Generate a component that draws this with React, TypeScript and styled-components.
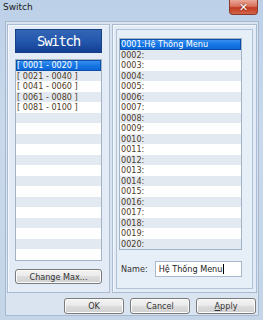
import styled, { createGlobalStyle } from 'styled-components'

const GlobalStyle = createGlobalStyle`
  html, body {
    margin: 0;
    padding: 0;
    background: #c6d7ea;
  }
  * {
    box-sizing: border-box;
  }
`

const Window = styled.div`
  background: linear-gradient(180deg, #bcd0e8 0%, #c9d9eb 40%, #c4d5e8 100%);
  display: flex;
  flex-direction: column;
  font-family: 'DejaVu Sans Condensed', 'DejaVu Sans', 'Liberation Sans', sans-serif;
  font-stretch: condensed;
  height: 320px;
  overflow: hidden;
  width: 263px;
`

const TitleBar = styled.div`
  align-items: flex-start;
  display: flex;
  height: 21px;
  justify-content: space-between;
  padding: 0 5px 0 3px;
`

const Title = styled.span`
  color: #1a1a1a;
  font-family: 'DejaVu Sans', sans-serif;
  font-size: 9px;
  font-stretch: normal;
  line-height: 15px;
`

const CloseButton = styled.div`
  align-items: center;
  background: linear-gradient(180deg, #e9a797 0%, #d9735d 45%, #c33a22 55%, #d2644a 100%);
  border: 1px solid #8a3a2c;
  border-radius: 0 0 4px 4px;
  border-top: none;
  color: #fff;
  display: flex;
  font-family: 'DejaVu Sans', sans-serif;
  font-size: 11px;
  font-stretch: normal;
  font-weight: bold;
  height: 15px;
  justify-content: center;
  text-shadow: 0 0 2px #5a1a10;
  width: 29px;
`

const Client = styled.div`
  background: #d9e4f0;
  border: 1px solid #a6b9cf;
  display: flex;
  flex-direction: column;
  height: 295px;
  margin: 0 4px 0 5px;
  padding: 2px 1px 0 1px;
`

const Panels = styled.div`
  display: flex;
  gap: 2px;
`

const GroupBox = styled.div<{ $width: number }>`
  background: #e3ecf6;
  border: 1px solid #a9bcd2;
  box-shadow: inset 1px 1px 0 #f4f8fc;
  display: flex;
  flex-direction: column;
  height: 269px;
  width: ${({ $width }) => $width}px;
`

const LeftGroup = styled(GroupBox)`
  padding: 4px 7px 0 7px;
`

const RightGroup = styled(GroupBox)`
  padding: 4px 3px 3px 3px;
`

const Header = styled.div`
  align-items: center;
  background: linear-gradient(180deg, #3465b6 0%, #2458ad 50%, #123f92 100%);
  border: 1px solid #163f86;
  color: #fff;
  display: flex;
  font-family: 'DejaVu Sans Mono', 'Liberation Mono', monospace;
  font-size: 14px;
  font-stretch: normal;
  height: 24px;
  justify-content: center;
  letter-spacing: -1.3px;
`

const List = styled.div<{ $height: number }>`
  background: #fff;
  border: 1px solid #a3b3c6;
  display: flex;
  flex-direction: column;
  height: ${({ $height }) => $height}px;
  overflow: hidden;
`

const Row = styled.div<{ $striped: boolean; $selected?: boolean }>`
  background: ${({ $selected, $striped }) =>
    $selected ? 'linear-gradient(180deg, #3f95f2 0%, #1676e4 50%, #0b63d2 100%)' : $striped ? '#e3e9f1' : '#fff'};
  color: ${({ $selected }) => ($selected ? '#fff' : '#4e3a26')};
  flex-shrink: 0;
  font-size: 9px;
  height: 10.5px;
  line-height: 10.5px;
  outline: ${({ $selected }) => ($selected ? '1px solid #0b4fae' : 'none')};
  outline-offset: -1px;
  padding-left: 1px;
  white-space: nowrap;
`

const LeftList = styled(List)`
  margin-top: 6px;
`

const Button = styled.div<{ $width: number }>`
  align-items: center;
  background: linear-gradient(180deg, #f3f3f3 0%, #ebebeb 45%, #dddddd 50%, #cfcfcf 100%);
  border: 1px solid #7a7a7a;
  border-radius: 3px;
  box-shadow: inset 0 0 0 1px #fcfcfc;
  color: #333;
  display: flex;
  font-size: 9px;
  height: 16px;
  justify-content: center;
  width: ${({ $width }) => $width}px;
`

const ChangeMax = styled(Button)`
  height: 15px;
  margin-top: 8px;
`

const InnerFrame = styled.div`
  background: #e6eef7;
  border: 1px solid #b2c2d5;
  display: flex;
  flex: 1;
  flex-direction: column;
  padding: 8px 10px 0 2px;
`

const NameRow = styled.div`
  align-items: center;
  display: flex;
  gap: 7px;
  margin-top: 11px;
  padding-left: 2px;
`

const Label = styled.span`
  color: #333;
  font-size: 9px;
`

const NameInput = styled.div`
  align-items: center;
  background: #fff;
  border: 1px solid #a9b9cc;
  color: #222;
  display: flex;
  font-size: 9px;
  height: 16px;
  padding-left: 3px;
  width: 88px;
`

const Caret = styled.span`
  background: #000;
  display: inline-block;
  height: 10px;
  margin-left: 1px;
  width: 1px;
`

const ButtonRow = styled.div`
  display: flex;
  gap: 6px;
  justify-content: flex-end;
  margin-top: 5px;
  padding-right: 1px;
`

const ranges = ['[ 0001 - 0020 ]', '[ 0021 - 0040 ]', '[ 0041 - 0060 ]', '[ 0061 - 0080 ]', '[ 0081 - 0100 ]']

const leftRows = Array.from({ length: 19 }, (_, i) => ranges[i] ?? '')

const rightRows = Array.from({ length: 20 }, (_, i) => {
  const code = String(i + 1).padStart(4, '0')
  return i === 0 ? `${code}:Hệ Thống Menu` : `${code}:`
})

export default function App() {
  return (
    <>
      <GlobalStyle />
      <Window>
        <TitleBar>
          <Title>Switch</Title>
          <CloseButton>✕</CloseButton>
        </TitleBar>
        <Client>
          <Panels>
            <LeftGroup $width={103}>
              <Header>Switch</Header>
              <LeftList $height={202}>
                {leftRows.map((text, index) => (
                  <Row $selected={index === 0} $striped={index % 2 === 1} key={index}>
                    {text}
                  </Row>
                ))}
              </LeftList>
              <ChangeMax $width={87}>Change Max...</ChangeMax>
            </LeftGroup>
            <RightGroup $width={145}>
              <InnerFrame>
                <List $height={212}>
                  {rightRows.map((text, index) => (
                    <Row $selected={index === 0} $striped={index % 2 === 1} key={index}>
                      {text}
                    </Row>
                  ))}
                </List>
                <NameRow>
                  <Label>Name:</Label>
                  <NameInput>
                    Hệ Thống Menu
                    <Caret />
                  </NameInput>
                </NameRow>
              </InnerFrame>
            </RightGroup>
          </Panels>
          <ButtonRow>
            <Button $width={60}>OK</Button>
            <Button $width={60}>Cancel</Button>
            <Button $width={60}>
              <span>
                <u>A</u>pply
              </span>
            </Button>
          </ButtonRow>
        </Client>
      </Window>
    </>
  )
}
